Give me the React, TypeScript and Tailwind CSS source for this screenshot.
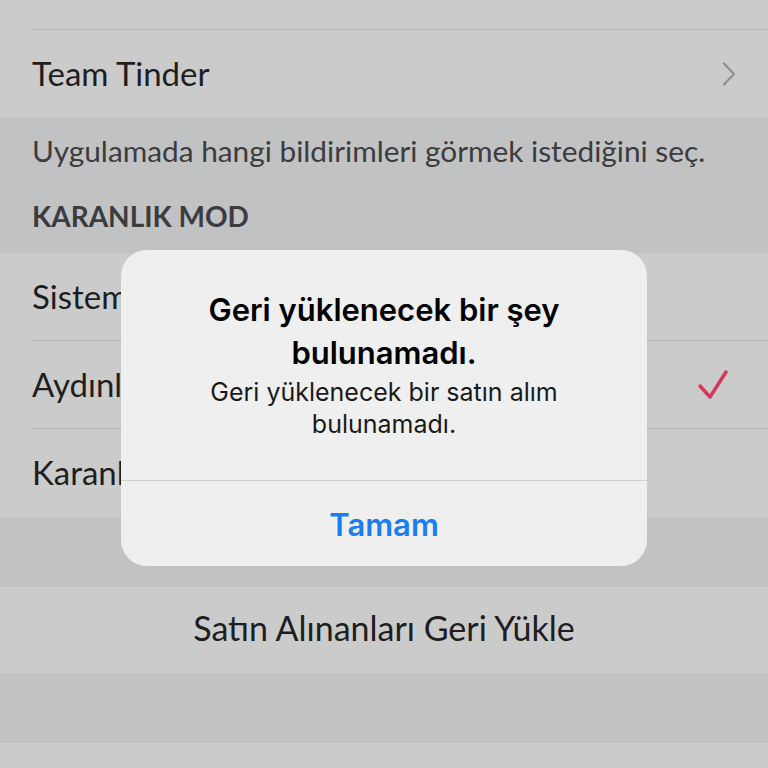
import React from "react";

const rowFont = { fontFamily: "Lato, 'Open Sans', sans-serif" };

function Chevron() {
  return (
    <svg width="16" height="26" viewBox="0 0 16 26" fill="none">
      <path d="M3 2.5l10 10.5L3 23.5" stroke="#8e8e8e" strokeWidth="2.2" strokeLinecap="round" strokeLinejoin="round" />
    </svg>
  );
}

function Check() {
  return (
    <svg width="32" height="32" viewBox="0 0 32 32" fill="none" className="mr-[8px]">
      <path d="M3 17l10 11L29 3" stroke="#d3395c" strokeWidth="3.5" strokeLinecap="round" strokeLinejoin="round" />
    </svg>
  );
}

function Row({ label, right, last }: { label: string; right?: React.ReactNode; last?: boolean }) {
  return (
    <div className="h-[88px] bg-[#cbcbcb] pl-[32px] flex">
      <div className={`flex-1 flex items-center justify-between pr-[31px] ${last ? "" : "border-b border-[#b9b9b9]"}`}>
        <span className="text-[33px] leading-[40px] text-[#1e1e1e] -mt-[2px]">{label}</span>
        {right}
      </div>
    </div>
  );
}

export default function App() {
  return (
    <div className="relative w-[768px] h-[768px] overflow-hidden bg-[#c1c2c4]" style={rowFont}>
      <div className="h-[30px] bg-[#cbcbcb] pl-[32px] flex">
        <div className="flex-1 border-b border-[#b9b9b9]" />
      </div>
      <Row label="Team Tinder" right={<Chevron />} last />
      <div className="h-[135px] px-[32px] flex flex-col">
        <p className="mt-[15px] text-[29.8px] leading-[36px] text-[#3c3c3e] whitespace-nowrap">Uygulamada hangi bildirimleri görmek istediğini seç.</p>
        <p className="mt-[30px] text-[28px] leading-[34px] font-bold text-[#3c3c3e]">KARANLIK MOD</p>
      </div>
      <Row label="Sistem" />
      <Row label="Aydınlık" right={<Check />} />
      <Row label="Karanlık" last />
      <div className="h-[70px]" />
      <div className="h-[86px] bg-[#cbcbcb] flex items-center justify-center border-t border-[#d2d2d2] pb-[5px]">
        <span className="text-[34px] leading-[40px] text-[#1e1e1e]">Satın Alınanları Geri Yükle</span>
      </div>
      <div className="h-[70px]" />
      <div className="h-[30px] bg-[#cbcbcb] border-t border-[#d2d2d2]" />

      <div
        className="absolute left-[121px] top-[250px] w-[526px] h-[316px] rounded-[26px] bg-[#efefef] flex flex-col"
        style={{ fontFamily: "Inter, 'Liberation Sans', sans-serif" }}
      >
        <div className="flex-1 flex flex-col items-center text-center px-[30px] pt-[38px]">
          <p className="text-[31px] leading-[43px] font-semibold text-black whitespace-nowrap">Geri yüklenecek bir şey<br />bulunamadı.</p>
          <p className="mt-[2px] text-[25px] leading-[32px] text-[#1a1a1a] whitespace-nowrap">Geri yüklenecek bir satın alım<br />bulunamadı.</p>
        </div>
        <div className="h-[86px] border-t border-[#cfcfcf] flex items-center justify-center pt-[4px]">
          <span className="text-[31px] font-semibold text-[#1a7ef0]">Tamam</span>
        </div>
      </div>
    </div>
  );
}
